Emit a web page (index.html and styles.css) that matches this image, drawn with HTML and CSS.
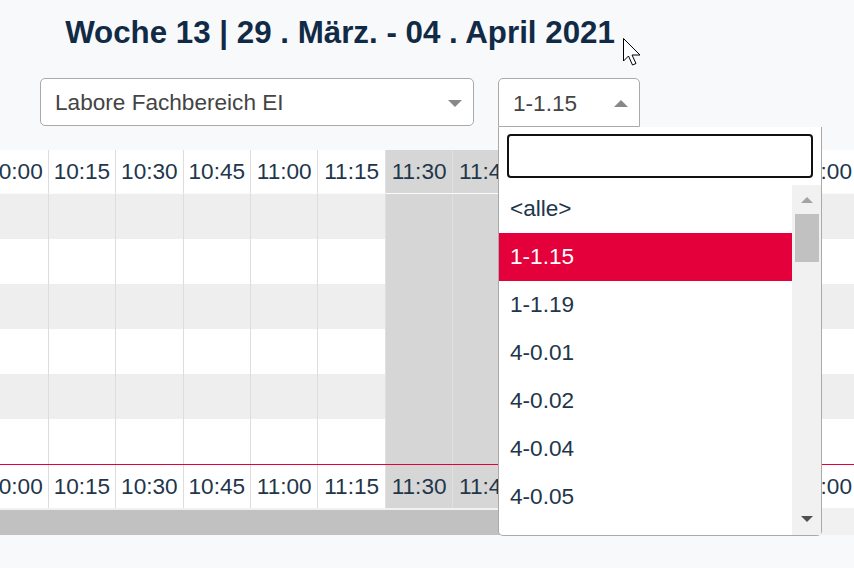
FILE: index.html
```html
<!DOCTYPE html>
<html lang="de">
<head>
<meta charset="utf-8">
<title>Laborbelegung</title>
<link rel="stylesheet" href="styles.css">
</head>
<body>
<div class="top">
  <h1 class="title">Woche 13 | 29 . März. - 04 . April 2021</h1>
  <div class="filters">
    <div class="select select-wide"><span class="select-text">Labore Fachbereich EI</span><span class="arrow arrow-down"></span></div>
    <div class="select-wrap">
      <div class="select select-open"><span class="select-text">1-1.15</span><span class="arrow arrow-up"></span></div>
      <div class="dropdown">
        <div class="search"></div>
        <div class="results">
          <ul class="options">
            <li>&lt;alle&gt;</li>
            <li class="hl">1-1.15</li>
            <li>1-1.19</li>
            <li>4-0.01</li>
            <li>4-0.02</li>
            <li>4-0.04</li>
            <li>4-0.05</li>
          </ul>
          <div class="vscroll">
            <span class="sarrow sarrow-up"></span>
            <span class="sthumb"></span>
            <span class="sfill"></span>
            <span class="sarrow sarrow-down"></span>
          </div>
        </div>
      </div>
    </div>
  </div>
</div>

<div class="plan">
  <div class="row head">
    <div class="c">10:00</div><div class="c">10:15</div><div class="c">10:30</div><div class="c">10:45</div><div class="c">11:00</div><div class="c">11:15</div><div class="c g">11:30</div><div class="c g">11:45</div><div class="c g">12:00</div><div class="c">12:15</div><div class="c">12:30</div><div class="c">12:45</div><div class="c">13:00</div>
  </div>
  <div class="row body alt">
    <div class="c"></div><div class="c"></div><div class="c"></div><div class="c"></div><div class="c"></div><div class="c"></div><div class="c g"></div><div class="c g"></div><div class="c g"></div><div class="c"></div><div class="c"></div><div class="c"></div><div class="c"></div>
  </div>
  <div class="row body">
    <div class="c"></div><div class="c"></div><div class="c"></div><div class="c"></div><div class="c"></div><div class="c"></div><div class="c g"></div><div class="c g"></div><div class="c g"></div><div class="c"></div><div class="c"></div><div class="c"></div><div class="c"></div>
  </div>
  <div class="row body alt">
    <div class="c"></div><div class="c"></div><div class="c"></div><div class="c"></div><div class="c"></div><div class="c"></div><div class="c g"></div><div class="c g"></div><div class="c g"></div><div class="c"></div><div class="c"></div><div class="c"></div><div class="c"></div>
  </div>
  <div class="row body">
    <div class="c"></div><div class="c"></div><div class="c"></div><div class="c"></div><div class="c"></div><div class="c"></div><div class="c g"></div><div class="c g"></div><div class="c g"></div><div class="c"></div><div class="c"></div><div class="c"></div><div class="c"></div>
  </div>
  <div class="row body alt">
    <div class="c"></div><div class="c"></div><div class="c"></div><div class="c"></div><div class="c"></div><div class="c"></div><div class="c g"></div><div class="c g"></div><div class="c g"></div><div class="c"></div><div class="c"></div><div class="c"></div><div class="c"></div>
  </div>
  <div class="row body">
    <div class="c"></div><div class="c"></div><div class="c"></div><div class="c"></div><div class="c"></div><div class="c"></div><div class="c g"></div><div class="c g"></div><div class="c g"></div><div class="c"></div><div class="c"></div><div class="c"></div><div class="c"></div>
  </div>
  <div class="row foot">
    <div class="c">10:00</div><div class="c">10:15</div><div class="c">10:30</div><div class="c">10:45</div><div class="c">11:00</div><div class="c">11:15</div><div class="c g">11:30</div><div class="c g">11:45</div><div class="c g">12:00</div><div class="c">12:15</div><div class="c">12:30</div><div class="c">12:45</div><div class="c">13:00</div>
  </div>
  <div class="hscroll"><div class="hthumb"></div></div>
</div>

<svg class="cursor" width="20" height="30" viewBox="0 0 20 30" aria-hidden="true">
  <path d="M0.5 0.5 L0.5 23 L5.5 18 L9.5 27 L13 25.5 L9 17 L17 17 Z" fill="#fff" stroke="#000" stroke-width="1" stroke-linejoin="miter"/>
</svg>
</body>
</html>
```

FILE: styles.css
```css
* { box-sizing: border-box; }

body {
  margin: 0;
  background: #f8f9fb;
  font-family: "Liberation Sans", Arial, Helvetica, sans-serif;
  position: relative;
  min-height: 568px;
}

.top {
  width: 600px;
  margin-left: 40px;
}

.title {
  margin: 0;
  padding-top: 14.5px;
  font-size: 31.3px;
  line-height: 36px;
  font-weight: bold;
  color: #112a46;
  text-align: center;
  white-space: nowrap;
}

.filters {
  display: flex;
  gap: 24px;
  margin-top: 27.5px;
  align-items: flex-start;
}

.select {
  display: flex;
  align-items: center;
  height: 48px;
  padding: 2px 11px 0 14px;
  background: #fff;
  border: 1px solid #aaa;
  border-radius: 5px;
  font-size: 22.6px;
  color: #444;
}

.select-wide { width: 434px; }

.select-wrap {
  position: relative;
  width: 142px;
}

.select-open {
  height: 49px;
  border-radius: 5px 5px 0 0;
}

.select-text { white-space: nowrap; }

.arrow {
  margin-left: auto;
  width: 0;
  height: 0;
  border-left: 7px solid transparent;
  border-right: 7px solid transparent;
}
.arrow-down { border-top: 7.5px solid #888; }
.arrow-up { border-bottom: 7.5px solid #888; }

.dropdown {
  position: absolute;
  left: 0;
  top: 49px;
  width: 324px;
  height: 409px;
  background: #fff;
  border: 1px solid #aaa;
  border-top: none;
  border-radius: 0 0 5px 5px;
  z-index: 10;
  display: flex;
  flex-direction: column;
}

.search {
  margin: 7px 8px 0;
  height: 44px;
  border: 2px solid #111;
  border-radius: 4px;
  background: #fff;
}

.results {
  margin-top: 7px;
  height: 350px;
  display: flex;
}

.options {
  flex: 1;
  margin: 0;
  padding: 0;
  list-style: none;
  overflow: hidden;
  font-size: 22.6px;
  color: #22364b;
}

.options li {
  height: 48px;
  line-height: 48px;
  padding-left: 11px;
  white-space: nowrap;
}

.options li.hl {
  background: #e4003a;
  color: #fff;
}

.vscroll {
  width: 29px;
  background: #f1f1f1;
  display: flex;
  flex-direction: column;
  align-items: center;
  padding-top: 12px;
}

.sarrow {
  width: 0;
  height: 0;
  border-left: 6.5px solid transparent;
  border-right: 6.5px solid transparent;
}
.sarrow-up { border-bottom: 6px solid #a3a3a3; }
.sarrow-down { border-top: 6px solid #505050; margin-bottom: 13px; }

.sthumb {
  width: 24px;
  height: 48px;
  margin-top: 11px;
  background: #c1c1c1;
}

.sfill { flex: 1; }

.plan {
  margin-top: 23px;
  width: 854px;
  overflow: hidden;
}

.row {
  display: flex;
  margin-left: -19.75px;
  width: max-content;
}

.c {
  flex: none;
  width: 67.45px;
  border-left: 1px solid #dddddd;
  text-align: center;
  font-size: 22.6px;
  color: #22364b;
  white-space: nowrap;
}

.c.g {
  background: #d6d6d6;
  border-left-color: #e0e0e0;
}

.head {
  background: #fff;
}
.head .c {
  height: 44px;
  line-height: 43px;
  border-bottom: 1px solid #fafafa;
}

.body { background: #fff; }
.body.alt { background: #eeeeee; }
.body .c { height: 45px; }

.foot {
  background: #fff;
  border-top: 1px solid #e4003a;
}
.foot .c {
  height: 43px;
  line-height: 43px;
}

.hscroll {
  height: 27px;
  background: #f1f1f1;
  padding-top: 2px;
}

.hthumb {
  width: 790px;
  height: 25px;
  background: #c1c1c1;
}

.cursor {
  position: absolute;
  left: 623px;
  top: 38px;
  z-index: 20;
}
```
